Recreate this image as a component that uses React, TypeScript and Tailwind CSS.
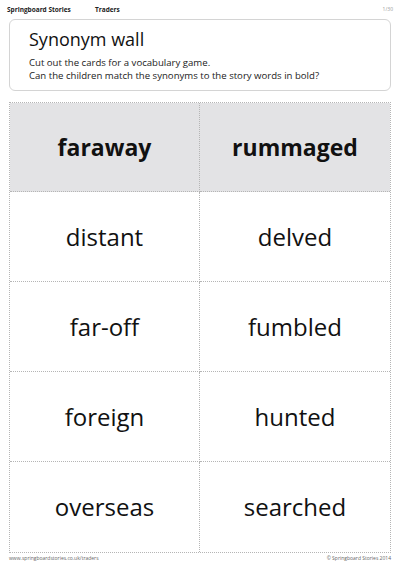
import React from "react";

const rows: [string, string][] = [
  ["distant", "delved"],
  ["far-off", "fumbled"],
  ["foreign", "hunted"],
  ["overseas", "searched"],
];

export default function App() {
  return (
    <div
      className="w-[400px] h-[566px] bg-white text-[#111] overflow-hidden relative"
      style={{ fontFamily: "'Open Sans', 'Noto Sans', sans-serif" }}
    >
      {/* top strip */}
      <div className="flex items-center h-[17px] px-[7px] pt-[2px] text-[6.5px] font-bold text-[#222]">
        <span className="w-[88px]">Springboard Stories</span>
        <span>Traders</span>
        <span className="ml-auto text-[5px] font-normal text-[#999]">1/30</span>
      </div>

      {/* intro box */}
      <div className="mx-[9px] mt-[2px] h-[72px] rounded-[6px] border border-[#d4d4d4] pl-[19px] pt-[8px]">
        <h1 className="text-[18px] leading-[22px] text-[#111]">Synonym wall</h1>
        <p className="mt-[6px] text-[9.6px] leading-[13px] text-[#222]">
          Cut out the cards for a vocabulary game.
          <br />
          Can the children match the synonyms to the story words in bold?
        </p>
      </div>

      {/* card grid */}
      <div className="mx-[9px] mt-[11px] w-[382px] grid grid-cols-2 border border-dotted border-[#b5b5b5]">
        <div className="h-[89px] bg-[#e3e3e5] flex items-center justify-center text-[23px] font-bold border-r border-b border-dotted border-[#b5b5b5]">
          faraway
        </div>
        <div className="h-[89px] bg-[#e3e3e5] flex items-center justify-center text-[23px] font-bold border-b border-dotted border-[#b5b5b5]">
          rummaged
        </div>
        {rows.map(([a, b], i) => (
          <React.Fragment key={i}>
            <div
              className={
                "h-[90px] flex items-center justify-center text-[24px] border-r border-dotted border-[#b5b5b5] " +
                (i < rows.length - 1 ? "border-b" : "")
              }
            >
              {a}
            </div>
            <div
              className={
                "h-[90px] flex items-center justify-center text-[24px] border-dotted border-[#b5b5b5] " +
                (i < rows.length - 1 ? "border-b" : "")
              }
            >
              {b}
            </div>
          </React.Fragment>
        ))}
      </div>

      {/* footer */}
      <div className="flex justify-between mx-[9px] mt-[2px] text-[5px] text-[#666]">
        <span>www.springboardstories.co.uk/traders</span>
        <span>© Springboard Stories 2014</span>
      </div>
    </div>
  );
}
